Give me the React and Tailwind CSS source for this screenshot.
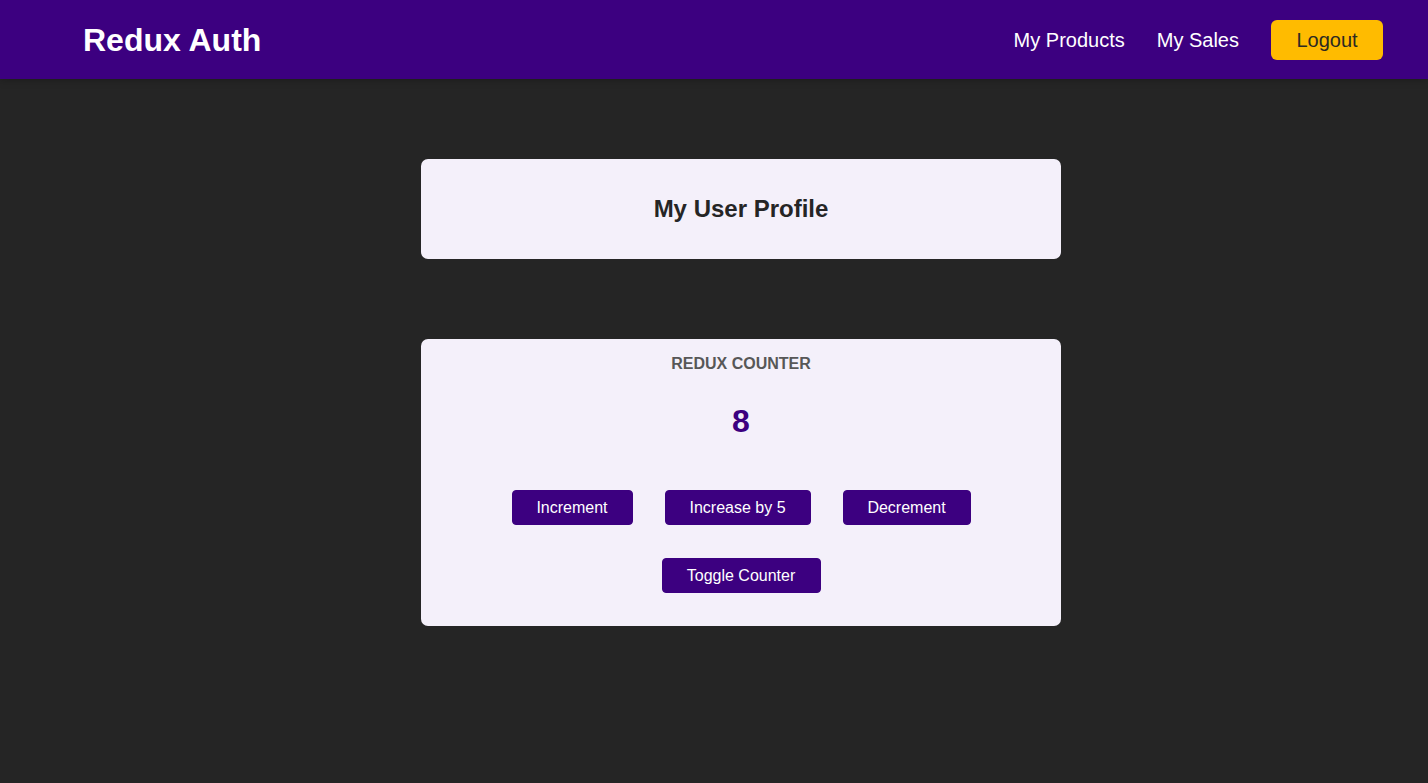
import React, { useState } from 'react';

const App = () => {
  const [counter, setCounter] = useState(8);
  const [showCounter, setShowCounter] = useState(true);

  const btn =
    "h-[35px] rounded-[4px] border border-[#3c0080] bg-[#3c0080] text-white text-base hover:bg-[#5a1d9e]";

  return (
    <div className="min-h-[783px] bg-[#252525] font-['Liberation_Sans',Arial,sans-serif]">
      {/* Header */}
      <header className="h-[79px] flex items-center justify-between bg-[#3c0080] pl-[83px] pr-[45px] shadow-[0_1px_8px_rgba(0,0,0,0.25)]">
        <h1 className="text-[32px] font-bold text-white leading-none">Redux Auth</h1>
        <nav>
          <ul className="flex items-center gap-8">
            <li>
              <a href="#" className="text-[20px] text-white">My Products</a>
            </li>
            <li>
              <a href="#" className="text-[20px] text-white">My Sales</a>
            </li>
            <li>
              <button className="h-[40px] w-[112px] rounded-[6px] bg-[#ffbb00] text-[20px] text-[#2c2922]">
                Logout
              </button>
            </li>
          </ul>
        </nav>
      </header>

      <main className="flex flex-col items-center pt-[80px] pl-[54px]">
        {/* Profile */}
        <section className="w-[640px] h-[100px] flex items-center justify-center rounded-[7px] bg-[#f4f0fa]">
          <h2 className="text-[24px] font-bold text-[#252525]">My User Profile</h2>
        </section>

        {/* Counter */}
        <section className="mt-[80px] w-[640px] rounded-[7px] bg-[#f4f0fa] pt-[15px] pb-[33px] flex flex-col items-center">
          <h1 className="text-base leading-[19px] font-bold uppercase text-[#575757]">
            Redux Counter
          </h1>
          <div className="mt-[30px] h-[37px] text-[32px] leading-[37px] font-bold text-[#3c0080]">
            {showCounter ? counter : ''}
          </div>
          <div className="mt-[50px] flex gap-8">
            <button className={`${btn} w-[121px]`} onClick={() => setCounter(counter + 1)}>Increment</button>
            <button className={`${btn} w-[146px]`} onClick={() => setCounter(counter + 5)}>Increase by 5</button>
            <button className={`${btn} w-[128px]`} onClick={() => setCounter(counter - 1)}>Decrement</button>
          </div>
          <button className={`${btn} w-[159px] mt-[33px]`} onClick={() => setShowCounter(!showCounter)}>
            Toggle Counter
          </button>
        </section>
      </main>
    </div>
  );
};

export default App;
